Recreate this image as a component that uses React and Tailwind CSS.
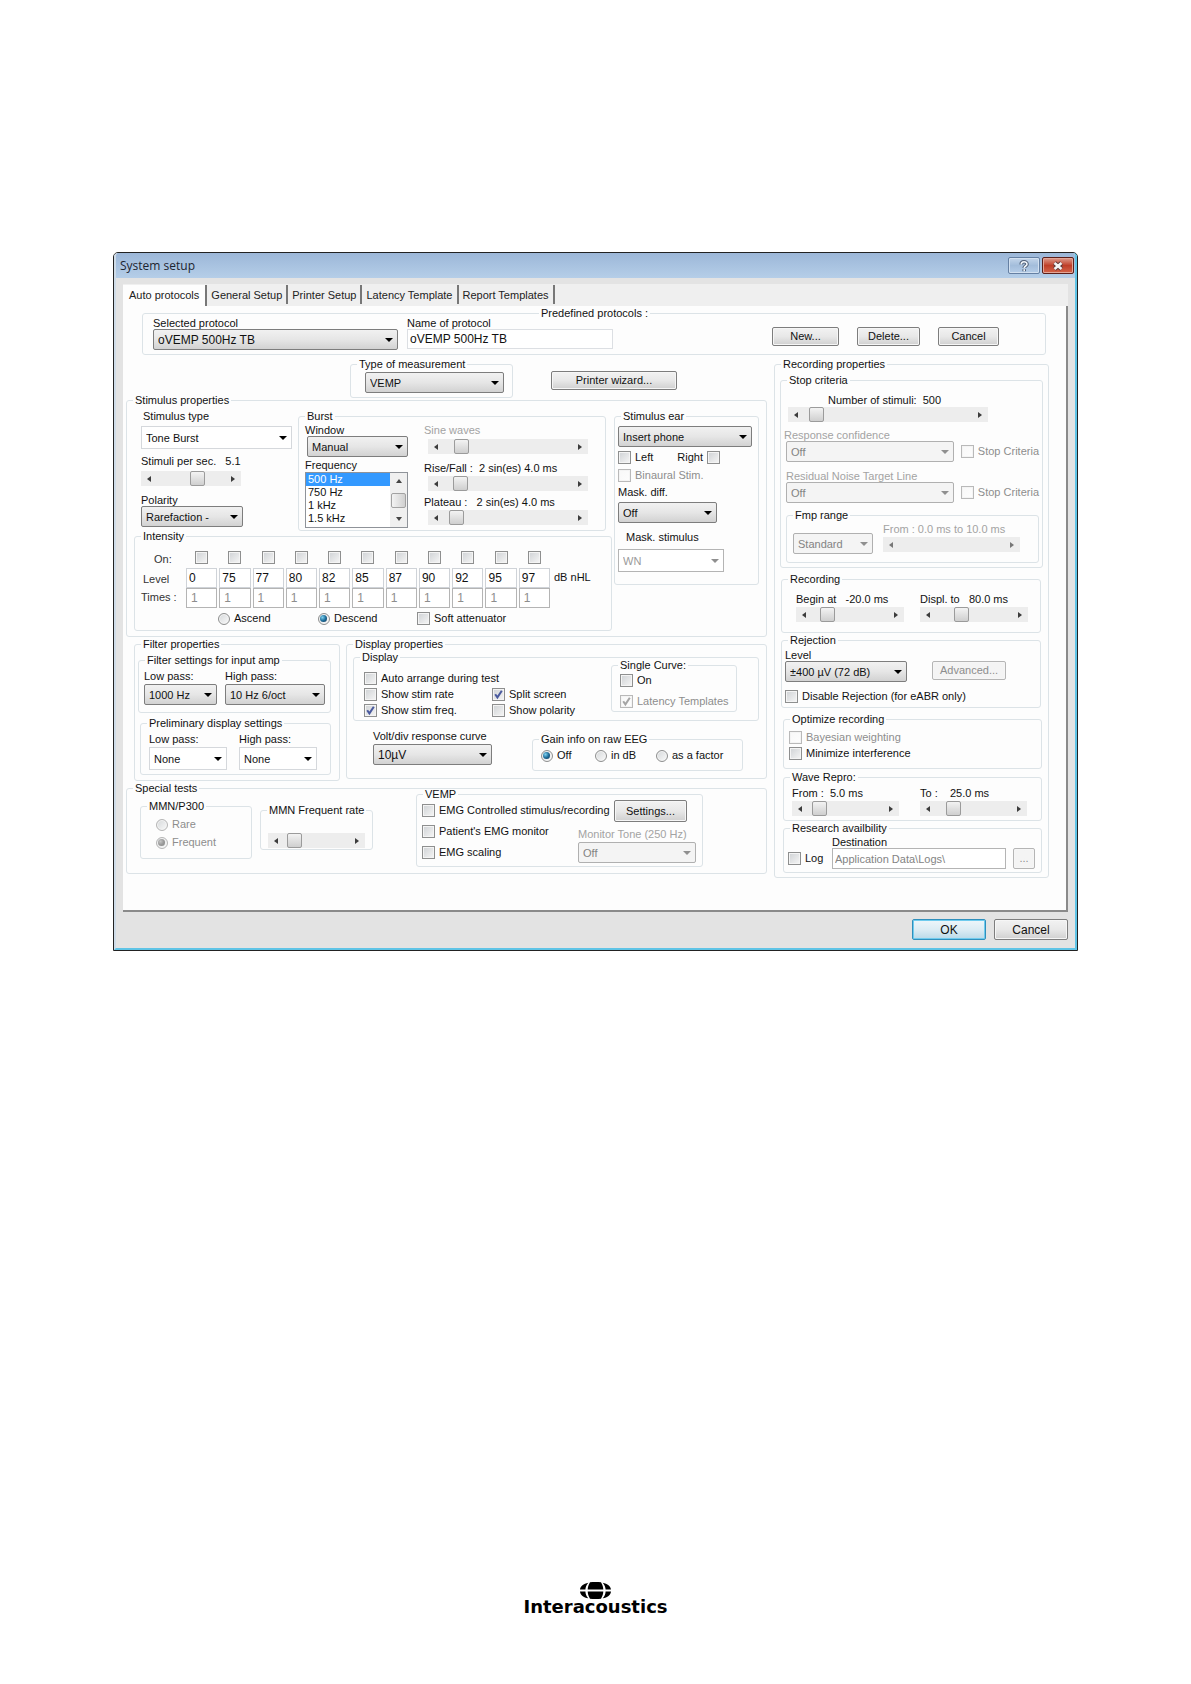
import React from 'react';

const Group = ({ title, className = '', body = '', legendClass = 'ml-1.5', children }) => (
  <fieldset className={`min-w-0 rounded-[3px] border border-[#dce3e7] ${className}`}>
    <legend className={`px-0.5 leading-3 whitespace-nowrap ${legendClass}`}>{title}</legend>
    <div className={body}>{children}</div>
  </fieldset>
);

const Check = ({ label, checked = false, disabled = false, labelFirst = false, className = '', ...rest }) => (
  <label className={`flex items-center gap-1 whitespace-nowrap leading-[13px] ${disabled ? 'text-[#8d8d8d]' : ''} ${labelFirst ? 'flex-row-reverse' : ''} ${className}`}>
    <span className="grid h-[13px] w-[13px] shrink-0">
      <input
        type="checkbox"
        defaultChecked={checked}
        disabled={disabled}
        className="col-start-1 row-start-1 h-[13px] w-[13px] appearance-none border border-[#8e8f8f] bg-linear-to-br from-[#cfd2d5] to-[#f6f6f6] shadow-[inset_0_0_0_1px_#f4f4f4] disabled:border-[#b9b9b9] disabled:from-[#f8f8f8] disabled:to-[#fdfdfd] peer"
        {...rest}
      />
      <svg viewBox="0 0 13 13" className="pointer-events-none invisible col-start-1 row-start-1 h-[13px] w-[13px] text-[#4a5a9e] peer-checked:visible peer-disabled:text-[#a5a5a5]">
        <path d="M3.2 6.2 5.4 9.4 9.8 2.8" fill="none" stroke="currentColor" strokeWidth="2" />
      </svg>
    </span>
    {label}
  </label>
);

const Radio = ({ label, name, checked = false, disabled = false }) => (
  <label className={`flex items-center gap-1 whitespace-nowrap leading-[13px] ${disabled ? 'text-[#8d8d8d]' : ''}`}>
    <span className="grid h-[13px] w-[13px] shrink-0 place-items-center">
      <input
        type="radio"
        name={name}
        defaultChecked={checked}
        disabled={disabled}
        className="peer col-start-1 row-start-1 h-[12px] w-[12px] appearance-none rounded-full border border-[#8e8f8f] bg-linear-to-br from-[#d5d8da] to-[#fafafa] shadow-[inset_0_0_0_1px_#f4f4f4] disabled:border-[#b5b5b5]"
      />
      <span className="pointer-events-none invisible col-start-1 row-start-1 h-[7px] w-[7px] rounded-full bg-radial-[at_35%_35%] from-[#7fd0ee] via-[#1f6f9c] to-[#0b2c4e] peer-checked:visible peer-disabled:from-[#c5c5c5] peer-disabled:via-[#9a9a9a] peer-disabled:to-[#858585]" />
    </span>
    {label}
  </label>
);

const Select = ({ label, value, flat = false, disabled = false, className = '' }) => {
  let look = 'h-[21px] rounded-[2px] border-[#7d7d7d] bg-linear-to-b from-[#f1f1f1] via-[#e6e6e6] to-[#d2d2d2]';
  if (flat) look = 'h-[23px] border-[#d5d8dc] bg-white';
  if (disabled) look = 'h-[21px] rounded-[2px] border-[#b0b0b0] bg-[#f4f4f4] text-[#838383]';
  if (flat && disabled) look = 'h-[23px] border-[#b4b4b4] bg-white text-[#9a9a9a]';
  return (
    <span className={`relative block ${className}`}>
      <select aria-label={label} disabled={disabled} className={`block w-full appearance-none border pl-1 pr-4 leading-[14px] opacity-100 ${look}`}>
        <option>{value}</option>
      </select>
      <svg viewBox="0 0 8 4" className={`pointer-events-none absolute right-[5px] top-1/2 -mt-0.5 h-1 w-2 ${disabled ? 'text-[#8f8f8f]' : 'text-black'}`}>
        <path d="M0 0h8L4 4z" fill="currentColor" />
      </svg>
    </span>
  );
};

const Arrow = ({ d, label, disabled }) => (
  <button type="button" aria-label={label} disabled={disabled} className="flex h-full w-4 shrink-0 items-center justify-center text-[#3c3c3c] disabled:text-[#777]">
    <svg viewBox="0 0 4 6" className="h-1.5 w-1">
      <path d={d} fill="currentColor" />
    </svg>
  </button>
);

const Slider = ({ label, value = 0, disabled = false, className = '' }) => (
  <div className={`flex h-[15px] bg-[#ededed] ${className}`}>
    <Arrow d="M4 0v6L0 3z" label={`Decrease ${label}`} disabled={disabled} />
    <input
      type="range"
      aria-label={label}
      defaultValue={value}
      disabled={disabled}
      className="h-[15px] w-0 min-w-0 flex-1 appearance-none bg-transparent [&::-webkit-slider-thumb]:h-[15px] [&::-webkit-slider-thumb]:w-[15px] [&::-webkit-slider-thumb]:appearance-none [&::-webkit-slider-thumb]:rounded-[2px] [&::-webkit-slider-thumb]:border [&::-webkit-slider-thumb]:border-[#9b9b9b] [&::-webkit-slider-thumb]:bg-linear-to-b [&::-webkit-slider-thumb]:from-[#f3f3f3] [&::-webkit-slider-thumb]:to-[#cfcfcf] disabled:[&::-webkit-slider-thumb]:invisible"
    />
    <Arrow d="M0 0v6l4-3z" label={`Increase ${label}`} disabled={disabled} />
  </div>
);

const Button = ({ children, primary = false, className = 'h-[19px]', ...rest }) => {
  const look = primary
    ? 'border-[#2f8fbc] from-[#eef6fa] via-[#dcecf4] to-[#b9d9e8] shadow-[inset_0_0_0_1px_#6fcbee]'
    : 'border-[#7d7d7d] from-[#f2f2f2] via-[#e8e8e8] to-[#d0d0d0] shadow-[inset_0_0_0_1px_#f6f6f6]';
  return (
    <button
      type="button"
      className={`flex shrink-0 items-center justify-center rounded-[2px] border bg-linear-to-b disabled:border-[#b5b5b5] disabled:from-[#f4f4f4] disabled:via-[#f4f4f4] disabled:to-[#f4f4f4] disabled:text-[#8d8d8d] ${look} ${className}`}
      {...rest}
    >
      {children}
    </button>
  );
};

const tabs = ['General Setup', 'Printer Setup', 'Latency Template', 'Report Templates'];
const levels = [0, 75, 77, 80, 82, 85, 87, 90, 92, 95, 97];
const frequencies = ['500 Hz', '750 Hz', '1 kHz', '1.5 kHz'];

const TitleBar = () => (
  <header className="flex h-[25px] items-start justify-between bg-linear-to-b from-[#9cb7d8] to-[#b5cee8] pl-1 pr-px">
    <h1 className="font-['Open_Sans',sans-serif] text-xs leading-[25px] text-[#1c2430]">System setup</h1>
    <div className="mt-1 flex gap-0.5">
      <button type="button" aria-label="Help" className="flex h-[17px] w-8 items-center justify-center rounded-[2px] border border-[#6580a3] bg-linear-to-b from-[#c3d5ea] via-[#a3bddb] to-[#b5cde8] shadow-[inset_0_0_0_1px_#d3e1f1]">
        <svg viewBox="0 0 12 12" className="h-3 w-3">
          <path d="M3.2 4.4C3.2 1 9 1 9 4.2 9 6 6.2 6 6.2 8M6.2 9.2v2" fill="none" stroke="#4f5f78" strokeWidth="3.6" />
          <path d="M3.2 4.4C3.2 1 9 1 9 4.2 9 6 6.2 6 6.2 8M6.2 9.2v2" fill="none" stroke="#f2f6fa" strokeWidth="1.6" />
        </svg>
      </button>
      <button type="button" aria-label="Close" className="flex h-[17px] w-8 items-center justify-center rounded-[2px] border border-[#5c1f1a] bg-linear-to-b from-[#dc9a8c] via-[#bf3e28] to-[#d3644a] shadow-[inset_0_0_0_1px_#e3a698]">
        <svg viewBox="0 0 12 10" className="h-2.5 w-3">
          <path d="m2.5 2 7 6m0-6-7 6" fill="none" stroke="#59393a" strokeWidth="4.4" />
          <path d="m2.5 2 7 6m0-6-7 6" fill="none" stroke="#f4f4f4" strokeWidth="2.6" />
        </svg>
      </button>
    </div>
  </header>
);

const TabStrip = () => (
  <nav className="flex h-[22px] bg-[#efefef] pt-px text-[#222]">
    <a href="#auto" className="border-r-2 border-[#777] bg-[#fdfdfd] pl-1.5 pr-1.5 leading-[20px]">Auto protocols</a>
    {tabs.map((tab) => (
      <a key={tab} href={`#${tab}`} className="mb-0.5 border-r-2 border-[#777] px-1 leading-[20px]">{tab}</a>
    ))}
  </nav>
);

const Protocols = () => (
  <Group title="Predefined protocols :" legendClass="ml-[396px]" className="ml-4 mr-5 h-[48px]" body="flex justify-between pl-2.5 pr-[46px]">
    <div className="-mt-0.5 flex gap-[9px]">
      <div className="w-[245px]">
        <p className="leading-3">Selected protocol</p>
        <Select label="Selected protocol" value="oVEMP 500Hz TB" className="text-xs" />
      </div>
      <label className="block w-[206px] leading-3">
        Name of protocol
        <input defaultValue="oVEMP 500Hz TB" className="block h-5 w-full border border-[#dcdfe3] bg-white pl-0.5 text-xs" />
      </label>
    </div>
    <div className="mt-2 flex gap-[18px]">
      <Button className="h-[19px] w-[67px]">New...</Button>
      <Button className="h-[19px] w-[63px]">Delete...</Button>
      <Button className="h-[19px] w-[61px]">Cancel</Button>
    </div>
  </Group>
);

const Burst = () => (
  <Group title="Burst" className="h-[121px]" body="flex gap-4 pl-1.5 pr-[17px]">
    <div className="w-[103px]">
      <p className="mt-0.5 leading-3">Window</p>
      <Select label="Window" value="Manual" className="ml-0.5" />
      <p className="mt-0.5 leading-3">Frequency</p>
      <div className="mt-px flex h-[56px] border border-[#8f9399] bg-white">
        <ul role="listbox" aria-label="Frequency" className="flex-1">
          {frequencies.map((f, i) => (
            <li key={f} role="option" aria-selected={i === 0} className="h-[13px] pl-0.5 leading-[13px] aria-selected:bg-[#3399ff] aria-selected:text-white">{f}</li>
          ))}
        </ul>
        <div className="flex w-[17px] flex-col items-center justify-between bg-[#f0f0f0] py-1.5">
          <svg viewBox="0 0 6 4" className="h-1 w-1.5"><path d="M0 4h6L3 0z" fill="#444" /></svg>
          <span className="h-[15px] w-[15px] rounded-[2px] border border-[#a2a2a2] bg-linear-to-r from-[#f3f3f3] to-[#d0d0d0]" />
          <svg viewBox="0 0 6 4" className="h-1 w-1.5"><path d="M0 0h6L3 4z" fill="#444" /></svg>
        </div>
      </div>
    </div>
    <div className="flex-1">
      <p className="mt-0.5 leading-3 text-[#a3a3a3]">Sine waves</p>
      <Slider label="Sine waves" value={9} className="ml-1 mt-[3px]" />
      <p className="mt-2 whitespace-pre leading-3">Rise/Fall :  2 sin(es) 4.0 ms</p>
      <Slider label="Rise/Fall" value={8} className="ml-1 mt-0.5" />
      <p className="mt-[5px] whitespace-pre leading-3">Plateau :   2 sin(es) 4.0 ms</p>
      <Slider label="Plateau" value={4} className="ml-1 mt-0.5" />
    </div>
  </Group>
);

const Intensity = () => (
  <Group title="Intensity" className="-mt-px h-[101px]">
    <div className="flex pl-1.5 pt-px">
      <div className="w-[45px] text-[#333]">
        <p className="pl-[13px] pt-2.5 leading-3">On:</p>
        <p className="pl-0.5 pt-2 leading-3">Level</p>
        <p className="pt-1.5 leading-3">Times :</p>
      </div>
      <div className="grid w-[364px] grid-cols-11 gap-x-0.5 pt-2">
        {levels.map((level) => (
          <Check key={level} aria-label={`On at ${level}`} className="mb-1 justify-center" />
        ))}
        {levels.map((level) => (
          <input key={level} aria-label={`Level ${level}`} defaultValue={level} className="h-5 min-w-0 border border-[#cfd3d8] bg-white pl-0.5 text-xs" />
        ))}
        {levels.map((level) => (
          <input key={level} aria-label={`Times at ${level}`} defaultValue="1" disabled className="h-5 min-w-0 border border-[#b4b4b4] bg-white pl-1 text-xs text-[#8d8d8d]" />
        ))}
      </div>
      <p className="pl-1 pt-7 leading-3">dB nHL</p>
    </div>
    <div className="mt-1 flex pl-[82px]">
      <div className="w-[100px]"><Radio label="Ascend" name="order" /></div>
      <div className="w-[100px]"><Radio label="Descend" name="order" checked /></div>
      <Check label="Soft attenuator" />
    </div>
  </Group>
);

const StimulusEar = () => (
  <Group title="Stimulus ear" className="h-[175px] w-[145px]" body="px-[3px]">
    <Select label="Stimulus ear" value="Insert phone" className="mt-1 w-[134px]" />
    <div className="mt-1 flex w-[102px] justify-between">
      <Check label="Left" />
      <Check label="Right" labelFirst />
    </div>
    <Check label="Binaural Stim." disabled className="mt-[5px]" />
    <p className="mt-1 leading-3">Mask. diff.</p>
    <Select label="Mask. diff." value="Off" className="mt-1 w-[99px]" />
    <p className="ml-2 mt-2 leading-3">Mask. stimulus</p>
    <Select label="Mask. stimulus" value="WN" flat disabled className="mt-1.5 w-[106px]" />
  </Group>
);

const StimulusProperties = () => (
  <Group title="Stimulus properties" className="h-[243px]" body="flex gap-0.5 px-[7px] pt-1">
    <div className="flex-1">
      <div className="flex">
        <div className="w-[164px] pl-[7px]">
          <p className="ml-0.5 leading-3">Stimulus type</p>
          <Select label="Stimulus type" value="Tone Burst" flat className="mt-1 w-[151px]" />
          <p className="mt-1.5 whitespace-pre leading-3">Stimuli per sec.   5.1</p>
          <Slider label="Stimuli per sec." value={63} className="mt-1 w-[100px]" />
          <p className="mt-2 leading-3">Polarity</p>
          <Select label="Polarity" value="Rarefaction -" className="w-[102px]" />
        </div>
        <div className="flex-1 pr-1.5"><Burst /></div>
      </div>
      <Intensity />
    </div>
    <StimulusEar />
  </Group>
);

const FilterProperties = () => (
  <Group title="Filter properties" className="h-[143px] w-[206px]" body="px-[3px]">
    <Group title="Filter settings for input amp" className="mt-1 h-[59px] w-[193px]" body="flex gap-2 pl-[5px] pt-1">
      <div className="w-[73px]">
        <p className="mb-0.5 leading-3">Low pass:</p>
        <Select label="Input amp low pass" value="1000 Hz" />
      </div>
      <div className="w-[100px]">
        <p className="mb-0.5 leading-3">High pass:</p>
        <Select label="Input amp high pass" value="10 Hz 6/oct" />
      </div>
    </Group>
    <Group title="Preliminary display settings" className="ml-0.5 mt-1 h-[58px] w-[191px]" body="flex gap-3 pl-2 pt-1">
      <div className="w-[78px]">
        <p className="mb-0.5 leading-3">Low pass:</p>
        <Select label="Display low pass" value="None" flat />
      </div>
      <div className="w-[78px]">
        <p className="mb-0.5 leading-3">High pass:</p>
        <Select label="Display high pass" value="None" flat />
      </div>
    </Group>
  </Group>
);

const DisplayProperties = () => (
  <Group title="Display properties" className="h-[141px] flex-1" body="pl-1.5 pr-[7px]">
    <Group title="Display" className="mt-px h-[70px]" body="flex justify-between pl-2.5 pr-[21px]">
      <div className="mt-[9px] grid grid-cols-[128px_auto] content-start gap-y-[3px]">
        <Check label="Auto arrange during test" className="col-span-2" />
        <Check label="Show stim rate" />
        <Check label="Split screen" checked />
        <Check label="Show stim freq." checked />
        <Check label="Show polarity" />
      </div>
      <Group title="Single Curve:" className="-mt-1 h-[53px] w-[126px]" body="pl-2">
        <Check label="On" className="mt-[3px]" />
        <Check label="Latency Templates" checked disabled className="mt-2" />
      </Group>
    </Group>
    <div className="flex justify-between pl-5 pr-4">
      <div className="mt-[9px] w-[119px]">
        <p className="mb-0.5 leading-3">Volt/div response curve</p>
        <Select label="Volt/div response curve" value="10µV" className="text-xs" />
      </div>
      <Group title="Gain info on raw EEG" className="mt-3 h-[38px] w-[211px]" body="mt-1 flex pl-[7px]">
        <div className="w-[54px]"><Radio label="Off" name="gain" checked /></div>
        <div className="w-[61px]"><Radio label="in dB" name="gain" /></div>
        <Radio label="as a factor" name="gain" />
      </Group>
    </div>
  </Group>
);

const SpecialTests = () => (
  <Group title="Special tests" className="mt-px h-[92px]" body="flex pl-[13px] pr-[63px]">
    <Group title="MMN/P300" className="mt-1.5 h-[59px] w-[112px]" body="mt-1.5 flex flex-col gap-[5px] pl-3.5">
      <Radio label="Rare" name="mmn" disabled />
      <Radio label="Frequent" name="mmn" checked disabled />
    </Group>
    <Group title="MMN Frequent rate" className="ml-2 mt-2.5 h-[46px] w-[113px]" body="px-[7px] pt-[17px]">
      <Slider label="MMN Frequent rate" value={6} />
    </Group>
    <Group title="VEMP" className="-mt-1.5 ml-auto h-[79px] w-[287px]" body="flex justify-between pl-[5px] pr-1.5">
      <div className="mt-1 flex flex-col gap-2">
        <Check label="EMG Controlled stimulus/recording" />
        <Check label="Patient's EMG monitor" />
        <Check label="EMG scaling" />
      </div>
      <div className="-ml-8 w-[118px]">
        <Button className="ml-9 h-[22px] w-[73px]">Settings...</Button>
        <p className="mt-1.5 whitespace-nowrap leading-3 text-[#a3a3a3]">Monitor Tone (250 Hz)</p>
        <Select label="Monitor Tone (250 Hz)" value="Off" disabled className="mt-0.5" />
      </div>
    </Group>
  </Group>
);

const StopCriteria = () => (
  <Group title="Stop criteria" className="mx-[5px] mt-1 h-[194px]" body="px-[3px]">
    <p className="mt-2 whitespace-pre pl-11 leading-3">Number of stimuli:  500</p>
    <Slider label="Number of stimuli" value={3} className="ml-1 mt-px w-[200px]" />
    <p className="mt-[7px] leading-3 text-[#a3a3a3]">Response confidence</p>
    <div className="ml-0.5 flex items-center gap-[7px]">
      <Select label="Response confidence" value="Off" disabled className="w-[169px]" />
      <Check label="Stop Criteria" disabled />
    </div>
    <p className="ml-0.5 mt-2 leading-3 text-[#a3a3a3]">Residual Noise Target Line</p>
    <div className="ml-0.5 flex items-center gap-[7px]">
      <Select label="Residual Noise Target Line" value="Off" disabled className="w-[169px]" />
      <Check label="Stop Criteria" disabled />
    </div>
    <Group title="Fmp range" className="ml-0.5 mt-1.5 h-[54px]" body="flex gap-2.5 px-1.5">
      <Select label="Fmp range" value="Standard" disabled className="mt-3 w-[80px]" />
      <div className="w-[137px]">
        <p className="mt-0.5 leading-3 text-[#a3a3a3]">From : 0.0 ms to 10.0 ms</p>
        <Slider label="Fmp range end" disabled className="mt-0.5" />
      </div>
    </Group>
  </Group>
);

const RecordingProperties = () => (
  <Group title="Recording properties" className="h-[520px] w-[275px] shrink-0">
    <StopCriteria />
    <div className="ml-1.5 mr-[7px]">
      <Group title="Recording" className="mt-[5px] h-[60px]" body="mt-2 flex justify-between pl-3.5 pr-3">
        <div className="w-[108px]">
          <p className="whitespace-pre leading-3">Begin at   -20.0 ms</p>
          <Slider label="Begin at" value={13} className="mt-0.5" />
        </div>
        <div className="w-[108px]">
          <p className="whitespace-pre leading-3">Displ. to   80.0 ms</p>
          <Slider label="Displ. to" value={30} className="mt-0.5" />
        </div>
      </Group>
      <Group title="Rejection" className="mt-px h-[74px]" body="pl-[3px] pr-[34px] pt-[3px]">
        <p className="leading-3">Level</p>
        <div className="flex items-start justify-between">
          <Select label="Rejection level" value="±400 µV (72 dB)" className="w-[122px]" />
          <Button disabled className="h-[19px] w-[74px]">Advanced...</Button>
        </div>
        <Check label="Disable Rejection (for eABR only)" className="mt-2" />
      </Group>
    </div>
    <div className="ml-2 mr-1.5">
      <Group title="Optimize recording" className="mt-[5px] h-[56px]" body="pl-[5px] pt-1.5">
        <Check label="Bayesian weighting" disabled />
        <Check label="Minimize interference" className="mt-[3px]" />
      </Group>
      <Group title="Wave Repro:" className="mt-0.5 h-[50px]" body="mt-1 flex justify-between pl-2 pr-3.5">
        <div className="w-[107px]">
          <p className="whitespace-pre leading-3">From :  5.0 ms</p>
          <Slider label="Wave repro from" value={7} className="mt-0.5" />
        </div>
        <div className="w-[107px]">
          <p className="whitespace-pre leading-3">To :    25.0 ms</p>
          <Slider label="Wave repro to" value={17} className="mt-0.5" />
        </div>
      </Group>
      <Group title="Research availbility" className="mt-px h-[51px]" body="flex items-end pl-1 pr-1.5">
        <Check label="Log" className="mb-1 w-11" />
        <label className="mt-0.5 flex-1 leading-3">
          Destination
          <input defaultValue="Application Data\Logs\" disabled className="block h-[21px] w-full border border-[#b4b4b4] bg-white pl-0.5 text-[#838383]" />
        </label>
        <Button disabled aria-label="Browse" className="ml-[7px] h-[21px] w-[22px]">...</Button>
      </Group>
    </div>
  </Group>
);

const Logo = () => (
  <footer className="mt-auto flex flex-col items-center pb-[71px]">
    <svg viewBox="0 0 31 17" className="h-[17px] w-[31px]">
      <path d="M10 .3C13 0 18 0 21 .3 22.6 3 23.2 5.4 23.3 7.6H7.7C7.8 5.4 8.4 3 10 .3zM7.7 9.4h15.6c-.1 2.2-.7 4.6-2.3 7.3-3 .3-8 .3-11 0-1.6-2.7-2.2-5.1-2.3-7.3z" />
      <path d="M8.3.7C6.3 3 5.5 5.4 5.4 7.6H0C.3 4.2 3.5 1.6 8.3.7zM22.7.7c2 2.3 2.8 4.7 2.9 6.9H31C30.7 4.2 27.5 1.6 22.7.7zM5.4 9.4c.1 2.2.9 4.6 2.9 6.9C3.5 15.4.3 12.8 0 9.4zM25.6 9.4c-.1 2.2-.9 4.6-2.9 6.9 4.8-.9 8-3.5 8.3-6.9z" />
    </svg>
    <p className="mt-0.5 font-['DejaVu_Sans',sans-serif] text-lg font-bold leading-3 text-black">Interacoustics</p>
  </footer>
);

export default function App() {
  return (
    <div className="flex min-h-screen flex-col bg-white font-['Liberation_Sans',Arial,sans-serif] text-[11px] text-[#111]">
      <main className="mx-[113px] mt-[252px] rounded-t-[5px] border border-[#222] bg-[#e3e3e3]">
        <div className="overflow-hidden rounded-t-[4px] border-2 border-t-0 border-[#cfdce8] border-b-[#5fc4e6] border-r-[#5fc4e6] pb-2">
          <TitleBar />
          <div className="mx-[7px] mt-1.5">
            <TabStrip />
            <section className="border-b-2 border-r-2 border-[#8a8a8a] bg-[#fdfdfd] pb-8 pl-[3px]">
              <div className="pt-px"><Protocols /></div>
              <div className="mt-[3px] flex gap-[7px] pr-[17px]">
                <div className="min-w-0 flex-1">
                  <div className="-mb-1 flex items-start pl-[224px]">
                    <Group title="Type of measurement" className="h-[40px] w-[163px]" body="pl-3.5 pr-2 pt-0.5">
                      <Select label="Type of measurement" value="VEMP" />
                    </Group>
                    <Button className="ml-[38px] mt-[13px] h-[19px] w-[126px]">Printer wizard...</Button>
                  </div>
                  <StimulusProperties />
                  <div className="mt-px flex gap-1.5 pl-2">
                    <FilterProperties />
                    <DisplayProperties />
                  </div>
                  <SpecialTests />
                </div>
                <RecordingProperties />
              </div>
            </section>
            <div className="mt-[7px] flex justify-end gap-2 text-xs">
              <Button primary className="h-[21px] w-[74px]">OK</Button>
              <Button className="h-[21px] w-[74px]">Cancel</Button>
            </div>
          </div>
        </div>
      </main>
      <Logo />
    </div>
  );
}
